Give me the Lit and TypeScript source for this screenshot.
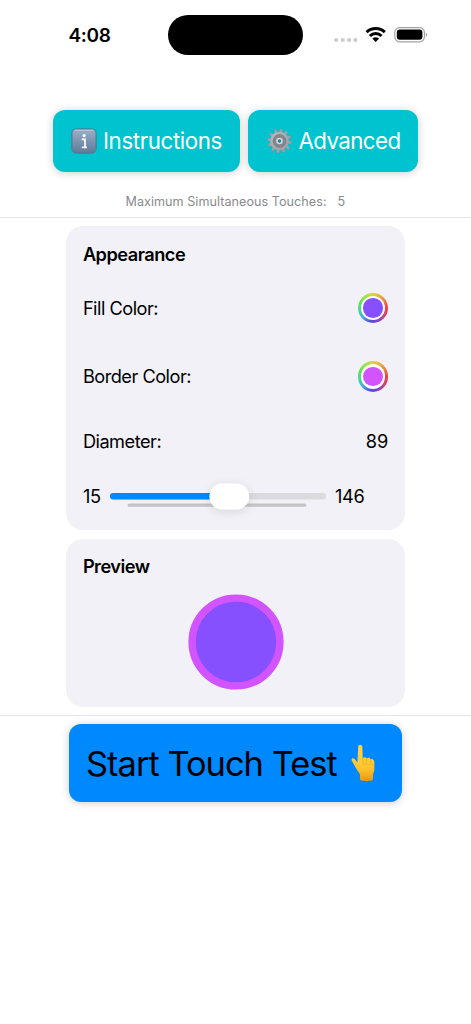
import { LitElement, html, css, svg } from "lit";
import { customElement, property, state } from "lit/decorators.js";

const GEAR_TEETH = Array.from({ length: 12 }, (_, i) => i * 30);

@customElement("status-bar")
class StatusBar extends LitElement {
  static styles = css`
    :host { display: grid; grid-template-columns: 168px 135px 168px; height: 54.5px; }
    .time { padding: 24px 0 0 68.5px; font-size: 19px; line-height: 24px; font-weight: 600; letter-spacing: -0.3px; }
    .island { margin-top: 15px; height: 39.5px; border-radius: 20px; background: #000; }
    .icons { display: flex; padding: 26px 0 0 31px; }
    svg { display: block; }
  `;
  render() {
    return html`
      <div class="time">4:08</div>
      <div class="island"></div>
      <div class="icons">
        <svg width="98" height="18" viewBox="0 0 98 18">
          <g fill="#cbcbcd">
            <circle cx="2.2" cy="14" r="2.05" /><circle cx="8.7" cy="14" r="2.05" />
            <circle cx="15.1" cy="14" r="2.05" /><circle cx="21.4" cy="14" r="2.05" />
          </g>
          <g fill="none" stroke="#000" stroke-width="3" transform="translate(-.2 -.7)">
            <path d="M32.8 6.8a13 13 0 0 1 18.2 0" />
            <path d="M36.1 10.7a8.2 8.2 0 0 1 11.6 0" />
          </g>
          <path d="M38.3 12.6q3.4-2.6 6.8 0L41.7 16z" fill="#000" />
          <rect x="60.8" y="1.6" width="29.6" height="14.2" rx="4.8" fill="none" stroke="#a3a3a3" stroke-width="1.2" />
          <rect x="62.8" y="3.6" width="25.6" height="10.2" rx="3" />
          <path d="M91.8 6.4q3 2.3 0 4.6z" fill="#a3a3a3" />
        </svg>
      </div>`;
  }
}

@customElement("color-well")
class ColorWell extends LitElement {
  @property() color = "#000";
  static styles = css`
    :host { display: block; width: 30.4px; height: 30.4px; }
    .ring {
      box-sizing: border-box; width: 100%; height: 100%; padding: 3px; border-radius: 50%;
      background: conic-gradient(#e0cf45, #e8b045 30deg, #ea7c40 60deg, #e8443f 90deg, #c8427f 130deg, #7b43cf 160deg, #5749e3 190deg, #45a6e6 225deg, #43d8a0 257deg, #5ee05b 290deg, #94e84c 325deg, #e0cf45);
    }
    .gap { box-sizing: border-box; width: 100%; height: 100%; padding: 2.4px; border-radius: 50%; background: #fff; }
    .fill { width: 100%; height: 100%; border-radius: 50%; }
  `;
  render() {
    return html`<div class="ring"><div class="gap"><div class="fill" style="background:${this.color}"></div></div></div>`;
  }
}

@customElement("app-root")
class AppRoot extends LitElement {
  @state() private fill = "#864fff";
  @state() private border = "#d154ff";
  @state() private diameter = 89;

  static styles = css`
    :host {
      display: block; width: 471px; height: 1024px; overflow: hidden; background: #fff; color: #000;
      font-family: Inter, "Liberation Sans", sans-serif; white-space: nowrap;
    }
    svg { display: block; flex: none; }
    .actions { display: flex; gap: 8.7px; margin: 55px 0 0 53px; }
    .button {
      box-sizing: border-box; display: flex; align-items: center; height: 62.2px; border-radius: 12px;
      background: #00c3d0; color: #fff; font-size: 22.3px; box-shadow: 0 1px 8px rgba(0, 0, 0, 0.2);
    }
    .info { width: 186.8px; padding-left: 18px; gap: 6px; letter-spacing: -0.38px; }
    .advanced { width: 169.8px; padding-left: 18.5px; gap: 6.5px; letter-spacing: -0.58px; }
    .touches {
      display: flex; gap: 11px; height: 45.3px; padding-left: 125.5px; box-sizing: border-box; padding-top: 22px;
      color: #8a8a8e; font-size: 12.6px; line-height: 16px; letter-spacing: 0.04px;
    }
    .rule { height: 1px; background: #e6e6e8; }
    .card { box-sizing: border-box; width: 339.5px; margin-left: 65.7px; border-radius: 17px; background: #f2f1f7; padding: 0 17.2px; }
    .appearance { height: 303.7px; margin-top: 8px; }
    .preview { height: 168px; margin-top: 9px; margin-bottom: 8.3px; }
    .title { height: 56px; line-height: 56px; font-size: 18.2px; font-weight: 600; letter-spacing: -0.5px; }
    .row { display: flex; align-items: center; justify-content: space-between; font-size: 18.2px; letter-spacing: -0.5px; }
    .fill-row { height: 52px; }
    .border-row { height: 85px; }
    .diameter-row { height: 44px; }
    .value { letter-spacing: -0.2px; }
    .slider-row { display: flex; align-items: center; height: 67px; font-size: 18.2px; letter-spacing: -0.3px; }
    .min { width: 27px; }
    .max { margin-left: 9px; }
    .preview .title { line-height: 55px; }
    .circle { display: block; margin: -0.7px 0 0 105.1px; }
    .start {
      box-sizing: border-box; display: flex; align-items: center; width: 333.2px; height: 77.2px; margin: 8.5px 0 0 69px; padding-left: 17px;
      border-radius: 12px; background: #0088ff; font-size: 34.4px; letter-spacing: -0.97px; box-shadow: 0 1px 8px rgba(0, 0, 0, 0.2);
    }
    .start-label { width: 265px; }
  `;

  private infoIcon() {
    return svg`<svg width="26" height="26" viewBox="0 0 26 26">
      <defs><linearGradient id="ig" x2="0" y2="1"><stop stop-color="#9db0c8" /><stop offset="1" stop-color="#5d7b9a" /></linearGradient></defs>
      <rect x=".9" y=".9" width="24.2" height="24.2" rx="4.3" fill="url(#ig)" stroke="#54708c" />
      <path d="M4 2.3h18" stroke="#b9c8da" stroke-width="1" stroke-linecap="round" />
      <circle cx="13.1" cy="7.6" r="1.6" fill="#fff" />
      <path d="M10.8 11.3h3.2v8M10.8 19.3h5" fill="none" stroke="#fff" stroke-width="1.7" />
    </svg>`;
  }

  private gearIcon() {
    return svg`<svg width="25" height="26" viewBox="-12.5 -13 25 26">
      <defs><linearGradient id="gg" x2="1" y2="1"><stop stop-color="#b9bbc0" /><stop offset="1" stop-color="#9a9ca1" /></linearGradient></defs>
      ${GEAR_TEETH.map((a) => svg`<path d="M-1.7 -8 L-1.1 -12.2 H1.1 L1.7 -8 Z" fill="#a3a4a9" stroke="#86868c" stroke-width=".3" transform="rotate(${a + 8})" />`)}
      <circle r="9.2" fill="url(#gg)" />
      <circle r="6.1" fill="#85878d" />
      <circle r="6.3" fill="none" stroke="#74767c" stroke-width=".9" />
      <circle r="3.3" fill="#d3d5d9" />
      <circle r="1.7" fill="#168b96" />
    </svg>`;
  }

  private slider() {
    return svg`<svg width="216" height="50" viewBox="0 0 216 50">
      <defs><filter id="ks" x="-50%" y="-50%" width="200%" height="200%"><feDropShadow dx="0" dy="2" stdDeviation="5" flood-opacity=".12" /></filter></defs>
      <rect x="0" y="22" width="216" height="6.4" rx="3.2" fill="#dbdade" />
      <rect x="0" y="22" width="116" height="6.4" rx="3.2" fill="#0088ff" />
      <rect x="17.6" y="32.6" width="178.6" height="3.2" rx="1.6" fill="#c4c4c7" />
      <rect x="99.4" y="12.6" width="39.8" height="26" rx="13" fill="#fff" filter="url(#ks)" />
    </svg>`;
  }

  private handIcon() {
    return svg`<svg width="26" height="38" viewBox="0 0 26 38">
      <defs>
        <linearGradient id="hg" x2="0" y2="1"><stop stop-color="#ffd54a" /><stop offset=".65" stop-color="#ffc42f" /><stop offset="1" stop-color="#e9950d" /></linearGradient>
      </defs>
      <path d="M7.2 2.8C7.3 0 11.2 0 11.3 2.8L11.7 14.2C13 12.9 14.8 13.2 15.7 14.6 17.2 13.3 19 13.8 19.6 15.2 21.5 14.5 23.2 15.8 23.3 18V25.2C23.3 27.2 22.4 28.7 22 30.4V35.3C22 37.8 9 37.8 9 35.3V31C8.5 28.6 6.1 26.8 5.1 24.2L.9 16.8C-.2 14.6 2.2 13.5 3.8 15.2L6.4 18.4Z" fill="url(#hg)" />
      <path d="M11.7 14.2v4M15.7 14.6v4.4M19.6 15.2v4.3M11.7 19.4q2 2 4 .4 2 1.6 3.9.3 2 1.2 3.6-.5" fill="none" stroke="#f0ac20" stroke-width=".7" />
    </svg>`;
  }

  render() {
    return html`
      <status-bar></status-bar>
      <div class="actions">
        <div class="button info">${this.infoIcon()}<span>Instructions</span></div>
        <div class="button advanced">${this.gearIcon()}<span>Advanced</span></div>
      </div>
      <div class="touches"><span>Maximum Simultaneous Touches:</span><span>5</span></div>
      <div class="rule"></div>
      <section class="card appearance">
        <div class="title">Appearance</div>
        <div class="row fill-row"><span>Fill Color:</span><color-well .color=${this.fill}></color-well></div>
        <div class="row border-row"><span>Border Color:</span><color-well .color=${this.border}></color-well></div>
        <div class="row diameter-row"><span>Diameter:</span><span class="value">${this.diameter}</span></div>
        <div class="slider-row"><span class="min">15</span>${this.slider()}<span class="max">146</span></div>
      </section>
      <section class="card preview">
        <div class="title">Preview</div>
        <svg class="circle" width="96" height="96" viewBox="-48 -48 96 96">
          <circle r="43.9" fill=${this.fill} stroke=${this.border} stroke-width="7.4" />
        </svg>
      </section>
      <div class="rule"></div>
      <div class="start"><span class="start-label">Start Touch Test</span>${this.handIcon()}</div>
    `;
  }
}
